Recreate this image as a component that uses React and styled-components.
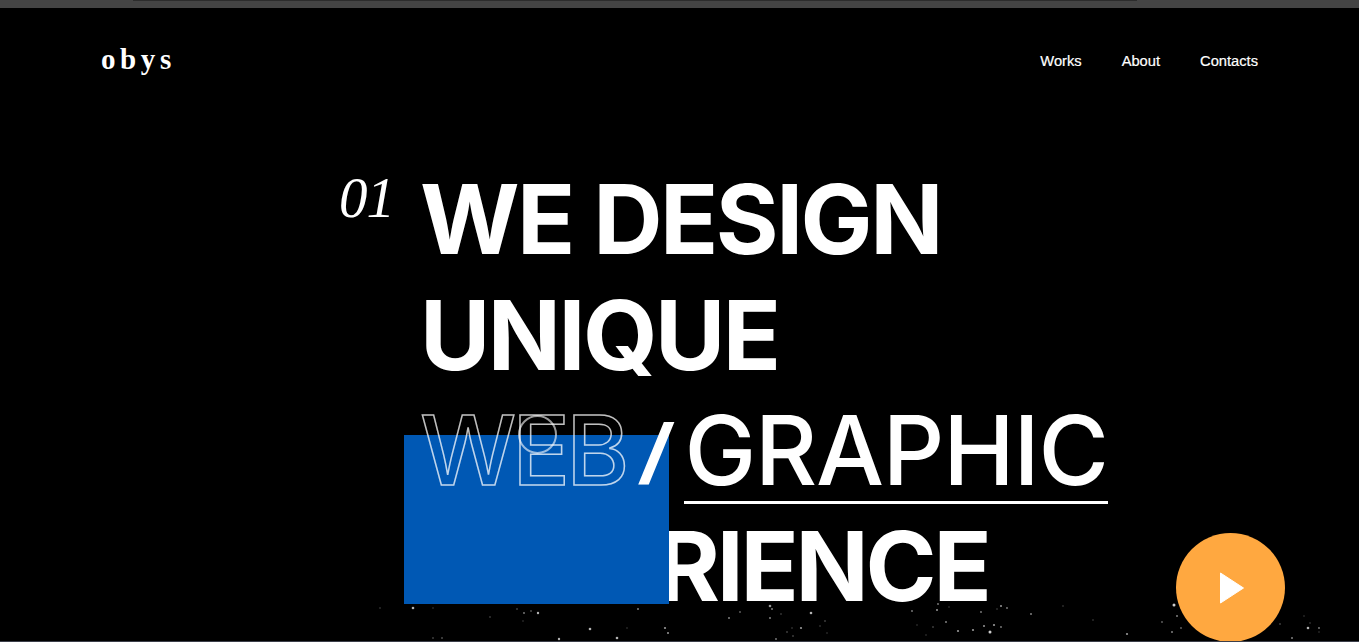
import styled, { createGlobalStyle } from 'styled-components'

const GlobalStyle = createGlobalStyle`
	* {
		box-sizing: border-box;
	}
	html, body {
		margin: 0;
		padding: 0;
		background: #000;
	}
`

const Page = styled.div`
	position: relative;
	height: 100vh;
	overflow: hidden;
	background: #000;
	color: #fff;
	border-bottom: 1px solid #3c3f4a;
`

const TopBar = styled.div`
	height: 8px;
	background: #444;
	padding: 0 222px 0 133px;

	&::before {
		content: '';
		display: block;
		height: 1px;
		background: #2c2c2c;
	}
`

const Nav = styled.nav`
	display: flex;
	justify-content: space-between;
	align-items: center;
	padding: 43px 101px 0 101px;
	height: 63px;
`

const Logo = styled.div`
	font-family: 'Liberation Serif', serif;
	font-size: 29px;
	font-weight: 700;
	letter-spacing: 4.6px;
	line-height: 1;
	margin-top: -3px;
`

const Links = styled.ul`
	display: flex;
	gap: 40px;
	list-style: none;
	margin: 0;
	padding: 0;
`

const LinkItem = styled.li`
	font-family: 'Liberation Sans', sans-serif;
	font-size: 14.7px;
	line-height: 20px;
	-webkit-text-stroke: 0.2px #fff;
`

const Hero = styled.section`
	display: flex;
	align-items: flex-start;
	padding: 91px 0 0 339px;
`

const Number = styled.div`
	width: 81px;
	font-family: 'Liberation Serif', serif;
	font-style: italic;
	font-size: 57px;
	line-height: 60px;
	letter-spacing: -1px;
	margin-top: 6px;
`

const Heading = styled.h1`
	margin: 0;
	font-family: Inter, sans-serif;
	font-size: 96px;
	font-weight: 700;
	letter-spacing: -2.5px;
	line-height: 115.7px;
	white-space: nowrap;
`

const Line = styled.div`
	display: flex;
	position: relative;
	z-index: ${(p) => (p.$front ? 3 : 1)};
	letter-spacing: ${(p) => (p.$tight ? '-3.2px' : 'inherit')};
`

const Outline = styled.span`
	color: transparent;
	font-weight: 500;
	letter-spacing: -4px;
	-webkit-text-stroke: 1.5px rgba(255, 255, 255, 0.75);
`

const Slash = styled.span`
	font-size: 70px;
	letter-spacing: 0;
	margin: 0 18px 0 18px;
	transform: skewX(-8deg);
	-webkit-text-stroke: 1.5px #fff;
`

const Underlined = styled.span`
	font-weight: 500;
	letter-spacing: -1.2px;
	line-height: 102px;
	height: 105px;
	margin-top: 6px;
	margin-left: -4px;
	border-bottom: 3px solid #fff;
`

const BlueBlock = styled.div`
	position: absolute;
	left: 404px;
	top: 435px;
	width: 265px;
	height: 169px;
	background: #0058b4;
	z-index: 2;
`

const CursorRing = styled.div`
	position: absolute;
	left: 518px;
	top: 415px;
	width: 39px;
	height: 39px;
	border: 2px solid rgba(255, 255, 255, 0.6);
	border-radius: 50%;
	z-index: 4;
`

const Particles = styled.svg`
	position: absolute;
	left: 0;
	bottom: 0;
	z-index: 1;
`

const PlayButton = styled.button`
	position: absolute;
	left: 1176px;
	top: 533px;
	width: 109px;
	height: 109px;
	border: none;
	border-radius: 50%;
	background: #ffa840;
	display: flex;
	align-items: center;
	justify-content: center;
	padding: 0 0 0 2px;
	z-index: 5;
`

// dust at the bottom of the hero, [x, y from y=604, radius, opacity]
const dust = [
	[413, 5, 1.3, 0.7], [380, 5, 0.7, 0.35], [433, 5, 0.7, 0.3], [490, 14, 0.8, 0.35], [517, 6, 0.8, 0.4],
	[524, 10, 0.9, 0.5], [531, 8, 0.8, 0.5], [538, 10, 1.2, 0.7], [523, 18, 0.7, 0.3], [590, 26, 1.3, 0.7],
	[627, 25, 0.7, 0.3], [638, 6, 1, 0.5], [665, 25, 1.1, 0.6], [668, 30, 1, 0.6], [617, 35, 1.3, 0.7],
	[559, 36, 1.2, 0.7], [433, 35, 0.8, 0.4], [442, 35, 0.8, 0.5], [770, 3, 1.3, 0.6], [772, 6, 1, 0.5],
	[740, 9, 0.9, 0.4], [729, 15, 1, 0.5], [770, 15, 1, 0.5], [781, 11, 0.7, 0.4], [811, 10, 1.3, 0.7],
	[825, 18, 0.8, 0.4], [820, 23, 0.7, 0.35], [801, 25, 1.1, 0.6], [792, 25, 0.7, 0.35], [787, 29, 0.8, 0.4],
	[793, 33, 0.8, 0.4], [776, 36, 0.9, 0.5], [827, 30, 0.7, 0.3], [912, 8, 0.9, 0.5], [938, 1, 0.9, 0.5],
	[937, 7, 1, 0.6], [949, 4, 0.7, 0.3], [981, 9, 0.9, 0.5], [1001, 3, 1, 0.6], [1007, 5, 0.9, 0.5],
	[997, 6, 0.7, 0.35], [1031, 11, 1, 0.5], [1063, 3, 0.7, 0.35], [1093, 17, 0.7, 0.35], [917, 22, 0.7, 0.3],
	[933, 24, 0.8, 0.4], [946, 19, 1, 0.5], [958, 28, 1.1, 0.6], [973, 27, 1.1, 0.6], [984, 23, 1, 0.6],
	[994, 22, 1.1, 0.6], [1001, 24, 0.9, 0.5], [990, 29, 1.5, 0.8], [926, 32, 0.7, 0.3], [1127, 31, 1.1, 0.6],
	[1174, 2, 1.5, 0.8], [1177, 13, 1, 0.5], [1162, 19, 0.9, 0.4], [1181, 25, 0.9, 0.4], [1172, 29, 1, 0.5],
	[1280, 21, 0.8, 0.4], [1304, 13, 0.7, 0.3], [1308, 25, 1.3, 0.7], [1319, 25, 0.9, 0.5], [1319, 29, 0.7, 0.3],
	[1292, 35, 1, 0.5], [1310, 20, 0.7, 0.35],
]

const Play = () => (
	<svg width='26' height='32' viewBox='0 0 26 32' aria-hidden='true'>
		<path d='M1.5 1 L24.5 16 L1.5 31 Z' fill='#fff' stroke='#fff' strokeWidth='1' strokeLinejoin='round' />
	</svg>
)

export default function App() {
	return (
		<Page>
			<GlobalStyle />
			<TopBar />
			<Nav>
				<Logo>obys</Logo>
				<Links>
					<LinkItem>Works</LinkItem>
					<LinkItem>About</LinkItem>
					<LinkItem>Contacts</LinkItem>
				</Links>
			</Nav>
			<Hero>
				<Number>01</Number>
				<Heading>
					<Line>WE DESIGN</Line>
					<Line>UNIQUE</Line>
					<Line $front>
						<Outline>WEB</Outline>
						<Slash>/</Slash>
						<Underlined>GRAPHIC</Underlined>
					</Line>
					<Line $tight>EXPERIENCE</Line>
				</Heading>
			</Hero>
			<BlueBlock />
			<CursorRing />
			<Particles width='1359' height='38' viewBox='0 0 1359 38' aria-hidden='true'>
				{dust.map(([x, y, r, o], i) => (
					<circle key={i} cx={x} cy={y} r={r} fill='#fff' opacity={o} />
				))}
			</Particles>
			<PlayButton aria-label='Play'>
				<Play />
			</PlayButton>
		</Page>
	)
}
